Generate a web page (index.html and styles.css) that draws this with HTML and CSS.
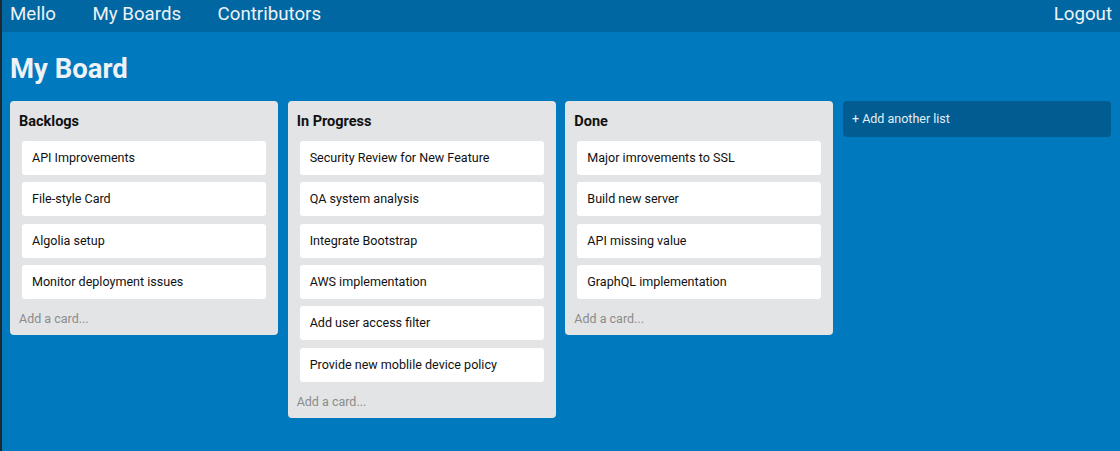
FILE: index.html
```html
<!DOCTYPE html>
<html>
<head>
<meta charset="utf-8">
<link rel="stylesheet" href="styles.css">
</head>
<body>
<nav class="nav">
  <div class="nav-left">
    <a class="nav-link">Mello</a>
    <a class="nav-link">My Boards</a>
    <a class="nav-link">Contributors</a>
  </div>
  <a class="nav-link">Logout</a>
</nav>
<main class="board">
  <h1 class="board-title">My Board</h1>
  <div class="lists">
    <section class="list">
      <h2 class="list-title">Backlogs</h2>
      <div class="cards">
        <div class="card">API Improvements</div>
        <div class="card">File-style Card</div>
        <div class="card">Algolia setup</div>
        <div class="card">Monitor deployment issues</div>
      </div>
      <div class="add-card">Add a card...</div>
    </section>
    <section class="list">
      <h2 class="list-title">In Progress</h2>
      <div class="cards">
        <div class="card">Security Review for New Feature</div>
        <div class="card">QA system analysis</div>
        <div class="card">Integrate Bootstrap</div>
        <div class="card">AWS implementation</div>
        <div class="card">Add user access filter</div>
        <div class="card">Provide new moblile device policy</div>
      </div>
      <div class="add-card">Add a card...</div>
    </section>
    <section class="list">
      <h2 class="list-title">Done</h2>
      <div class="cards">
        <div class="card">Major imrovements to SSL</div>
        <div class="card">Build new server</div>
        <div class="card">API missing value</div>
        <div class="card">GraphQL implementation</div>
      </div>
      <div class="add-card">Add a card...</div>
    </section>
    <div class="add-list">+ Add another list</div>
  </div>
</main>
</body>
</html>
```
FILE: styles.css
```css
html, body {
  margin: 0;
  padding: 0;
}
body {
  font-family: Roboto, "Liberation Sans", sans-serif;
  background: #0079bf;
  height: 451px;
  border-left: 2px solid #1e2a30;
  box-sizing: border-box;
}
.nav {
  height: 32px;
  background: #0067a3;
  display: flex;
  justify-content: space-between;
  align-items: flex-start;
  padding: 0 8px;
  box-sizing: border-box;
}
.nav-left {
  display: flex;
  gap: 36.5px;
}
.nav-link {
  color: #eef2f5;
  font-size: 18.7px;
  line-height: 29px;
}
.board {
  padding: 0 8px;
}
.board-title {
  margin: 0;
  padding-top: 19px;
  height: 50px;
  box-sizing: border-box;
  font-size: 27.5px;
  line-height: 36px;
  font-weight: 700;
  color: #eef2f5;
}
.lists {
  display: flex;
  align-items: flex-start;
  gap: 9.67px;
  margin-top: 19px;
}
.list {
  width: 268px;
  background: #e2e4e6;
  border-radius: 4px;
  padding: 0 9px;
  box-sizing: border-box;
  display: flex;
  flex-direction: column;
}
.list-title {
  margin: 0;
  height: 40px;
  padding-top: 2px;
  box-sizing: border-box;
  line-height: 38px;
  font-size: 14.5px;
  font-weight: 700;
  color: #111;
}
.cards {
  display: flex;
  flex-direction: column;
  gap: 7.33px;
  padding: 0 3px;
}
.card {
  background: #fff;
  border-radius: 3px;
  height: 34px;
  line-height: 34px;
  padding: 0 10px;
  font-size: 12.55px;
  color: #111;
}
.add-card {
  height: 36px;
  padding-top: 4px;
  box-sizing: border-box;
  line-height: 32px;
  font-size: 12.5px;
  color: #8c8c8c;
}
.add-list {
  width: 268px;
  height: 36px;
  line-height: 36px;
  padding: 0 9px;
  box-sizing: border-box;
  border-radius: 4px;
  background: #005c91;
  color: #e4edf4;
  font-size: 12.5px;
}
```
